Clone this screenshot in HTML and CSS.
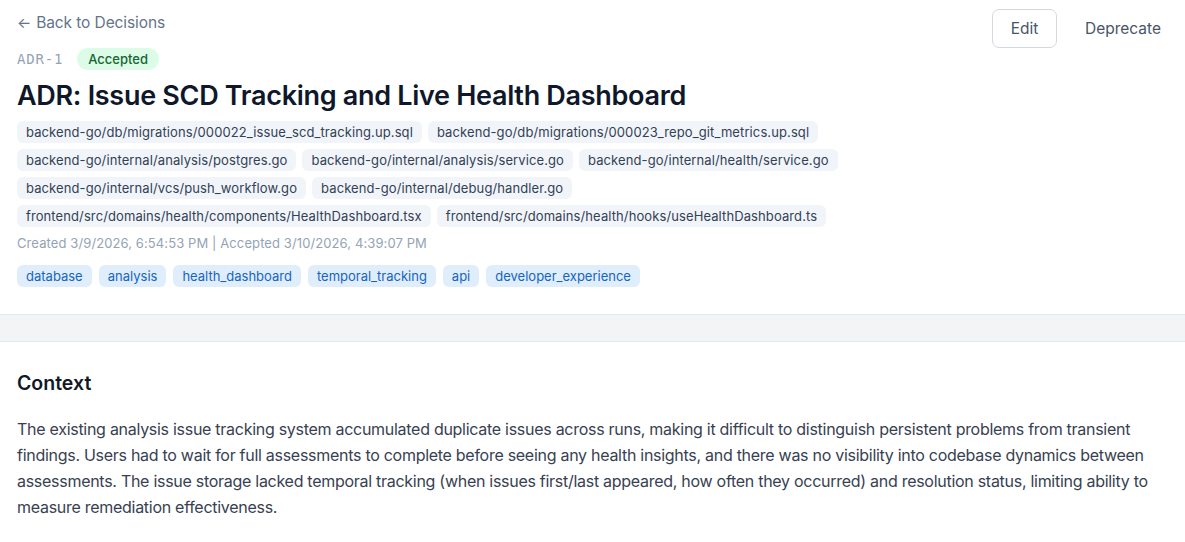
FILE: index.html
```html
<!DOCTYPE html>
<html lang="en">
<head>
<meta charset="utf-8">
<title>ADR-1</title>
<link rel="stylesheet" href="styles.css">
</head>
<body>
<div class="page">
  <header class="header">
    <div class="header-top">
      <div class="header-main">
        <a class="back" href="#"><span class="back-arrow">←</span> Back to Decisions</a>
        <div class="meta-row">
          <span class="adr-id">ADR-1</span>
          <span class="status">Accepted</span>
        </div>
        <h1 class="title">ADR: Issue SCD Tracking and Live Health Dashboard</h1>
      </div>
      <div class="actions">
        <button class="btn btn-outline">Edit</button>
        <button class="btn btn-ghost">Deprecate</button>
      </div>
    </div>
    <div class="files">
      <span class="file">backend-go/db/migrations/000022_issue_scd_tracking.up.sql</span>
      <span class="file">backend-go/db/migrations/000023_repo_git_metrics.up.sql</span>
      <span class="file">backend-go/internal/analysis/postgres.go</span>
      <span class="file">backend-go/internal/analysis/service.go</span>
      <span class="file">backend-go/internal/health/service.go</span>
      <span class="file">backend-go/internal/vcs/push_workflow.go</span>
      <span class="file">backend-go/internal/debug/handler.go</span>
      <span class="file">frontend/src/domains/health/components/HealthDashboard.tsx</span>
      <span class="file">frontend/src/domains/health/hooks/useHealthDashboard.ts</span>
    </div>
    <p class="dates">Created 3/9/2026, 6:54:53 PM | Accepted 3/10/2026, 4:39:07 PM</p>
    <div class="tags">
      <span class="tag">database</span>
      <span class="tag">analysis</span>
      <span class="tag">health_dashboard</span>
      <span class="tag">temporal_tracking</span>
      <span class="tag">api</span>
      <span class="tag">developer_experience</span>
    </div>
  </header>
  <div class="band"></div>
  <section class="section">
    <h2 class="section-title">Context</h2>
    <p class="section-body">The existing analysis issue tracking system accumulated duplicate issues across runs, making it difficult to distinguish persistent problems from transient findings. Users had to wait for full assessments to complete before seeing any health insights, and there was no visibility into codebase dynamics between assessments. The issue storage lacked temporal tracking (when issues first/last appeared, how often they occurred) and resolution status, limiting ability to measure remediation effectiveness.</p>
  </section>
</div>
</body>
</html>
```

FILE: styles.css
```css
* { box-sizing: border-box; }
html, body { margin: 0; padding: 0; background: #fff; }
body {
  font-family: Inter, "Noto Sans", "Liberation Sans", sans-serif;
  color: #111827;
  overflow: hidden;
}
.page { width: 1185px; }
.header {
  padding: 12px 17px 27px 17px;
}
.header-top {
  display: flex;
  justify-content: space-between;
  align-items: flex-start;
}
.header-main { display: flex; flex-direction: column; }
.back {
  color: #64748b;
  font-size: 15.5px;
  line-height: 22px;
  text-decoration: none;
  display: inline-flex;
  align-items: center;
  gap: 5px;
  letter-spacing: -0.1px;
}
.back-arrow { font-size: 15px; }
.meta-row {
  display: flex;
  align-items: center;
  gap: 14px;
  margin-top: 14px;
}
.adr-id {
  font-family: "DejaVu Sans Mono", "Liberation Mono", monospace;
  font-size: 14px;
  color: #94a3b8;
  letter-spacing: 0.8px;
}
.status {
  background: #dcfce7;
  color: #166534;
  font-size: 13px;
  font-weight: 500;
  line-height: 22px;
  padding: 0 11px;
  border-radius: 999px;
}
.title {
  margin: 9px 0 0 0;
  font-size: 27px;
  line-height: 34px;
  font-weight: 600;
  color: #0f172a;
  letter-spacing: -0.3px;
}
.actions {
  display: flex;
  align-items: center;
  gap: 11px;
  margin-top: -3px;
  margin-right: -10px;
}
.btn {
  font-family: inherit;
  font-size: 15.5px;
  color: #475569;
  background: #fff;
  height: 39px;
  padding: 0 16px;
  border-radius: 7px;
  cursor: pointer;
}
.btn-outline { border: 1px solid #d4d8de; padding: 0 17px; width: 65px; }
.btn-ghost { border: 1px solid transparent; }
.files {
  display: flex;
  flex-wrap: wrap;
  gap: 6px;
  margin-top: 8px;
  max-width: 880px;
}
.file {
  background: #f1f5f9;
  color: #334155;
  font-size: 13px;
  line-height: 22px;
  padding: 0 9px;
  border-radius: 6px;
  letter-spacing: 0.1px;
}
.dates {
  margin: 7px 0 0 0;
  font-size: 13px;
  line-height: 18px;
  color: #94a3b8;
  letter-spacing: 0.1px;
}
.tags {
  display: flex;
  flex-wrap: wrap;
  gap: 7px;
  margin-top: 13px;
}
.tag {
  background: #e0edfb;
  color: #1565c0;
  font-size: 13px;
  line-height: 22px;
  padding: 0 9px;
  border-radius: 6px;
}
.band {
  height: 28px;
  background: #f3f4f6;
  border-top: 1px solid #e2e8f0;
  border-bottom: 1px solid #e2e8f0;
}
.section { padding: 28px 17px 0 17px; }
.section-title {
  margin: 0;
  font-size: 19.5px;
  line-height: 26px;
  font-weight: 600;
  color: #111827;
}
.section-body {
  margin: 20px 0 0 0;
  font-size: 16px;
  line-height: 26px;
  color: #374151;
  letter-spacing: -0.28px;
}
```
